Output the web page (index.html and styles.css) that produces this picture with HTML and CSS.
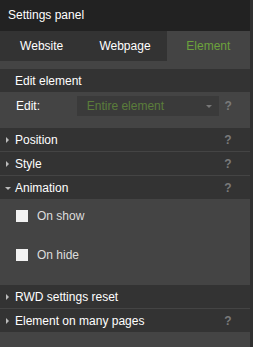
FILE: index.html
```html
<!DOCTYPE html>
<html>
<head>
    <meta name="viewport" content="width=device-width, initial-scale=1.0">
    <title>Settings panel</title>
    <link rel="stylesheet" href="styles.css">
</head>
<body>
    <div class="panel">
        <div class="panel-title">Settings panel</div>
        <div class="tabs">
            <div class="tab">Website</div>
            <div class="tab">Webpage</div>
            <div class="tab active">Element</div>
        </div>
        <div class="sections">
            <div class="section">
                <div class="section-head">Edit element</div>
                <div class="edit-row">
                    <span class="edit-label">Edit:</span>
                    <div class="select">
                        <span>Entire element</span>
                        <span class="caret"></span>
                    </div>
                    <span class="help">?</span>
                </div>
            </div>
            <div class="section">
                <div class="section-head"><span class="arrow"></span>Position<span class="help">?</span></div>
            </div>
            <div class="section">
                <div class="section-head"><span class="arrow"></span>Style<span class="help">?</span></div>
            </div>
            <div class="section">
                <div class="section-head"><span class="arrow down"></span>Animation<span class="help">?</span></div>
                <div class="anim-body">
                    <label class="check"><span class="box"></span>On show</label>
                    <label class="check"><span class="box"></span>On hide</label>
                </div>
            </div>
            <div class="section">
                <div class="section-head"><span class="arrow"></span>RWD settings reset</div>
            </div>
            <div class="section">
                <div class="section-head"><span class="arrow"></span>Element on many pages<span class="help">?</span></div>
            </div>
        </div>
    </div>
</body>
</html>
```

FILE: styles.css
```css
body {
    margin: 0;
    font-family: 'Liberation Sans', Arial, sans-serif;
    font-size: 12px;
    color: #fff;
    background: #444;
}
.panel {
    width: 250px;
    min-height: 347px;
    background: #444;
    border-right: 3px solid #303030;
    display: flex;
    flex-direction: column;
}
.panel-title {
    height: 31px;
    line-height: 30px;
    padding-left: 8px;
    background: #222;
}
.tabs {
    display: flex;
    height: 30px;
    background: #333;
}
.tab {
    flex: 1;
    text-align: center;
    line-height: 30px;
}
.tab.active {
    background: #444;
    color: #6ca23c;
}
.sections {
    padding-top: 8px;
    display: flex;
    flex-direction: column;
    gap: 1px;
}
.section-head {
    height: 23px;
    box-sizing: border-box;
    padding-top: 1px;
    display: flex;
    align-items: center;
    padding-left: 15px;
    background: #333;
    position: relative;
}
.arrow {
    position: absolute;
    left: 6px;
    top: 9px;
    border-left: 3px solid #bbb;
    border-top: 3px solid transparent;
    border-bottom: 3px solid transparent;
}
.arrow.down {
    left: 5px;
    top: 11px;
    border-top: 3px solid #bbb;
    border-left: 3px solid transparent;
    border-right: 3px solid transparent;
    border-bottom: 0;
}
.help {
    margin-left: auto;
    width: 18px;
    margin-right: 13px;
    text-align: center;
    color: #7a7a7a;
    font-weight: bold;
}
.edit-row {
    display: flex;
    align-items: center;
    padding: 4px 0 11px 16px;
}
.edit-label {
    width: 61px;
}
.select {
    width: 133px;
    height: 20px;
    padding: 0 0 0 10px;
    background: #3a3a3a;
    color: #5b7d3a;
    display: flex;
    align-items: center;
}
.caret {
    margin-left: auto;
    margin-right: 7px;
    border-top: 3px solid #777;
    border-left: 3px solid transparent;
    border-right: 3px solid transparent;
}
.anim-body {
    padding: 11px 0 23px 16px;
    display: flex;
    flex-direction: column;
    gap: 27px;
}
.check {
    display: flex;
    align-items: center;
    color: #ddd;
    height: 12px;
}
.box {
    width: 12px;
    height: 12px;
    background: #f2f2f2;
    margin-right: 9px;
}
```
